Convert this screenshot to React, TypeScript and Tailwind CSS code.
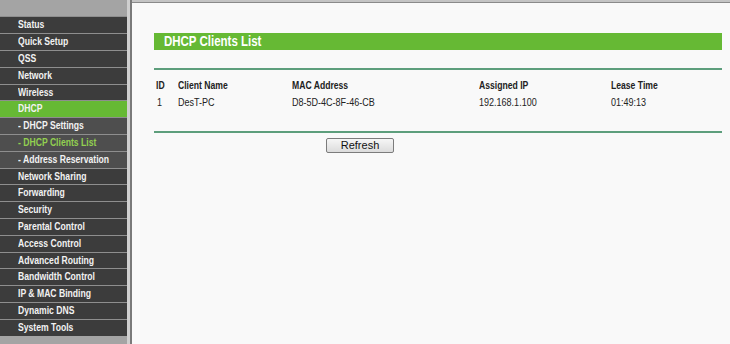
import React from 'react';

type MenuItem = { label: string; sub?: boolean; active?: boolean; current?: boolean; short?: boolean };

// row pitch in the original is 17,17,17,17,16 repeating
const menu: MenuItem[] = [
  { label: 'Status' },
  { label: 'Quick Setup' },
  { label: 'QSS' },
  { label: 'Network' },
  { label: 'Wireless', short: true },
  { label: 'DHCP', active: true },
  { label: '- DHCP Settings', sub: true },
  { label: '- DHCP Clients List', sub: true, current: true },
  { label: '- Address Reservation', sub: true },
  { label: 'Network Sharing', short: true },
  { label: 'Forwarding' },
  { label: 'Security' },
  { label: 'Parental Control' },
  { label: 'Access Control' },
  { label: 'Advanced Routing', short: true },
  { label: 'Bandwidth Control' },
  { label: 'IP & MAC Binding' },
  { label: 'Dynamic DNS' },
  { label: 'System Tools' },
];

const clients = [{ id: 1, name: 'DesT-PC', mac: 'D8-5D-4C-8F-46-CB', ip: '192.168.1.100', lease: '01:49:13' }];

// the router UI font is a narrow Arial; no narrow face is installed, so squeeze it
function Narrow({ children }: { children: React.ReactNode }) {
  return <span className="inline-block origin-left scale-x-[0.82] whitespace-nowrap">{children}</span>;
}

function Sidebar() {
  return (
    <div className="flex h-full shrink-0">
      <div className="w-[127px] bg-[#a4a4a4] pt-[16px]">
        {menu.map((m) => {
          let bg = 'bg-[#3c3c3c]';
          if (m.active) bg = 'bg-[#66b934]';
          else if (m.sub) bg = 'bg-[#4e4e4e]';
          return (
            <div
              key={m.label}
              className={`flex items-center overflow-hidden whitespace-nowrap border-t border-[#8e8e8e] pl-[18px] text-[10.5px] font-bold ${bg} ${
                m.short ? 'h-[16px]' : 'h-[17px]'
              } ${m.current ? 'text-[#92d050]' : 'text-[#f2f2f2]'}`}
            >
              <Narrow>{m.label}</Narrow>
            </div>
          );
        })}
      </div>
      <div className="w-[3px] bg-[#cfcfcf]" />
      <div className="w-[2px] bg-[#7a7a7a]" />
    </div>
  );
}

export default function App() {
  return (
    <div className="flex h-[344px] w-[730px] flex-col overflow-hidden bg-[#f9f9f9] font-['Liberation_Sans',Arial,sans-serif]">
      <div className="flex min-h-0 flex-1">
        <Sidebar />
        <div className="flex flex-1 flex-col">
          <div className="h-[3px] border-b border-[#8a8a8a] bg-[#c4c4c4]" />
          <div className="pl-[22px] pr-[8px] pt-[30px]">
            <div className="flex h-[17px] items-center bg-[#66b934] pl-[10px] text-[14px] font-bold text-white">
              <Narrow>DHCP Clients List</Narrow>
            </div>
            <div className="mt-[18px] h-[2px] bg-[#5d9e7c]" />
            <table className="mt-[7px] w-full border-collapse text-[11px] text-[#222]">
              <thead>
                <tr className="h-[17px] text-left text-[10.5px] font-bold">
                  <th className="w-[24px] pl-[2px] font-bold"><Narrow>ID</Narrow></th>
                  <th className="w-[114px] font-bold"><Narrow>Client Name</Narrow></th>
                  <th className="w-[187px] font-bold"><Narrow>MAC Address</Narrow></th>
                  <th className="w-[132px] font-bold"><Narrow>Assigned IP</Narrow></th>
                  <th className="font-bold"><Narrow>Lease Time</Narrow></th>
                </tr>
              </thead>
              <tbody>
                {clients.map((c) => (
                  <tr key={c.id} className="h-[17px]">
                    <td className="pl-[3px]"><Narrow>{c.id}</Narrow></td>
                    <td><Narrow>{c.name}</Narrow></td>
                    <td><Narrow>{c.mac}</Narrow></td>
                    <td><Narrow>{c.ip}</Narrow></td>
                    <td><Narrow>{c.lease}</Narrow></td>
                  </tr>
                ))}
              </tbody>
            </table>
            <div className="mt-[20px] h-[2px] bg-[#5d9e7c]" />
            <div className="mt-[5px] pl-[172px]">
              <button className="flex h-[15px] w-[68px] items-center justify-center rounded-[2px] border border-[#7c7c7c] bg-gradient-to-b from-[#f6f6f6] to-[#dcdcdc] text-[11px] text-[#111]">
                Refresh
              </button>
            </div>
          </div>
        </div>
      </div>
    </div>
  );
}
